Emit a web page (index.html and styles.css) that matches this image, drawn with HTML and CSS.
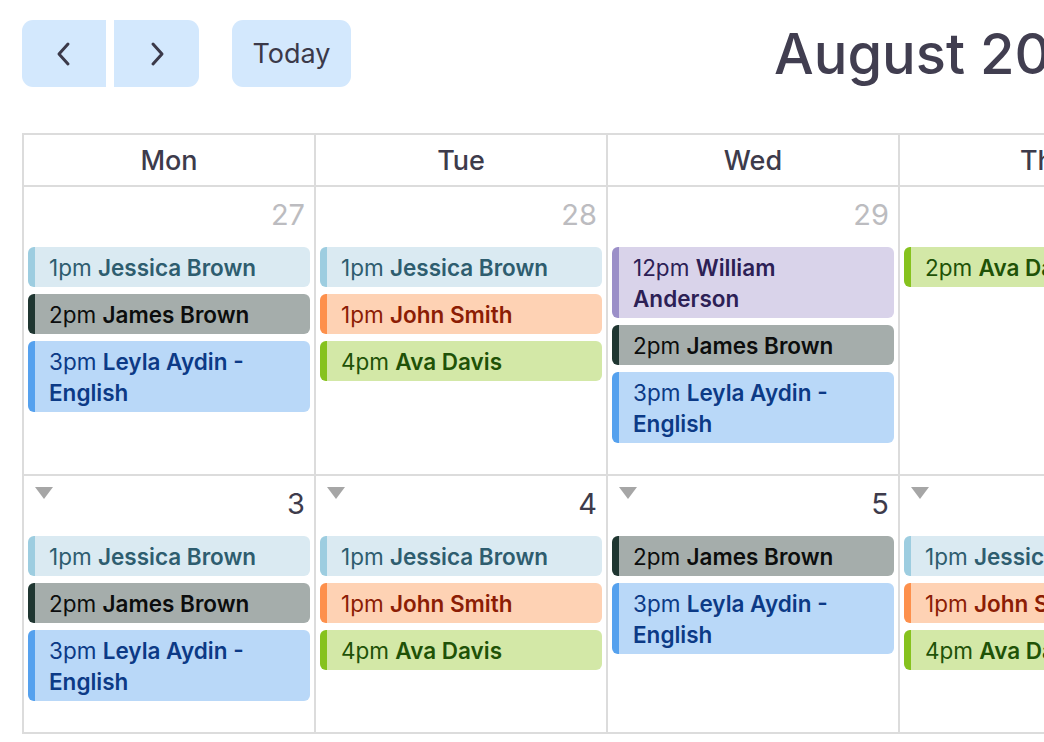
FILE: index.html
```html
<!DOCTYPE html>
<html lang="en">
<head>
<meta charset="utf-8">
<title>Calendar</title>
<link rel="stylesheet" href="styles.css">
</head>
<body>
<div class="page">
  <div class="toolbar">
    <div class="nav-group">
      <button class="btn btn-prev" aria-label="Previous">
        <svg width="16" height="26" viewBox="0 0 16 26"><path d="M12 3 L3 13 L12 23" fill="none" stroke="#3b3949" stroke-width="3" stroke-linecap="round" stroke-linejoin="round"/></svg>
      </button>
      <button class="btn btn-next" aria-label="Next">
        <svg width="16" height="26" viewBox="0 0 16 26"><path d="M4 3 L13 13 L4 23" fill="none" stroke="#3b3949" stroke-width="3" stroke-linecap="round" stroke-linejoin="round"/></svg>
      </button>
    </div>
    <button class="btn btn-today">Today</button>
    <h1 class="title">August 2026</h1>
  </div>

  <div class="calendar">
    <div class="head">Mon</div>
    <div class="head">Tue</div>
    <div class="head">Wed</div>
    <div class="head">Thu</div>
    <div class="head">Fri</div>
    <div class="head">Sat</div>
    <div class="head">Sun</div>

    <!-- week 1 -->
    <div class="cell">
      <div class="day-top"><span></span><span class="num other">27</span></div>
      <div class="ev ev-jessica"><span class="t">1pm</span> <b>Jessica Brown</b></div>
      <div class="ev ev-james"><span class="t">2pm</span> <b>James Brown</b></div>
      <div class="ev ev-leyla"><span class="t">3pm</span> <b>Leyla Aydin - English</b></div>
    </div>
    <div class="cell">
      <div class="day-top"><span></span><span class="num other">28</span></div>
      <div class="ev ev-jessica"><span class="t">1pm</span> <b>Jessica Brown</b></div>
      <div class="ev ev-john"><span class="t">1pm</span> <b>John Smith</b></div>
      <div class="ev ev-ava"><span class="t">4pm</span> <b>Ava Davis</b></div>
    </div>
    <div class="cell">
      <div class="day-top"><span></span><span class="num other">29</span></div>
      <div class="ev ev-william"><span class="t">12pm</span> <b>William Anderson</b></div>
      <div class="ev ev-james"><span class="t">2pm</span> <b>James Brown</b></div>
      <div class="ev ev-leyla"><span class="t">3pm</span> <b>Leyla Aydin - English</b></div>
    </div>
    <div class="cell">
      <div class="day-top"><span></span><span class="num other">30</span></div>
      <div class="ev ev-ava"><span class="t">2pm</span> <b>Ava Davis</b></div>
    </div>
    <div class="cell">
      <div class="day-top"><span></span><span class="num other">31</span></div>
    </div>
    <div class="cell">
      <div class="day-top"><span class="tri"></span><span class="num">1</span></div>
    </div>
    <div class="cell">
      <div class="day-top"><span class="tri"></span><span class="num">2</span></div>
    </div>

    <!-- week 2 -->
    <div class="cell">
      <div class="day-top"><span class="tri"></span><span class="num">3</span></div>
      <div class="ev ev-jessica"><span class="t">1pm</span> <b>Jessica Brown</b></div>
      <div class="ev ev-james"><span class="t">2pm</span> <b>James Brown</b></div>
      <div class="ev ev-leyla"><span class="t">3pm</span> <b>Leyla Aydin - English</b></div>
    </div>
    <div class="cell">
      <div class="day-top"><span class="tri"></span><span class="num">4</span></div>
      <div class="ev ev-jessica"><span class="t">1pm</span> <b>Jessica Brown</b></div>
      <div class="ev ev-john"><span class="t">1pm</span> <b>John Smith</b></div>
      <div class="ev ev-ava"><span class="t">4pm</span> <b>Ava Davis</b></div>
    </div>
    <div class="cell">
      <div class="day-top"><span class="tri"></span><span class="num">5</span></div>
      <div class="ev ev-james"><span class="t">2pm</span> <b>James Brown</b></div>
      <div class="ev ev-leyla"><span class="t">3pm</span> <b>Leyla Aydin - English</b></div>
    </div>
    <div class="cell">
      <div class="day-top"><span class="tri"></span><span class="num">6</span></div>
      <div class="ev ev-jessica"><span class="t">1pm</span> <b>Jessica Brown</b></div>
      <div class="ev ev-john"><span class="t">1pm</span> <b>John Smith</b></div>
      <div class="ev ev-ava"><span class="t">4pm</span> <b>Ava Davis</b></div>
    </div>
    <div class="cell">
      <div class="day-top"><span class="tri"></span><span class="num">7</span></div>
    </div>
    <div class="cell">
      <div class="day-top"><span class="tri"></span><span class="num">8</span></div>
    </div>
    <div class="cell">
      <div class="day-top"><span class="tri"></span><span class="num">9</span></div>
    </div>
  </div>
</div>
</body>
</html>
```

FILE: styles.css
```css
html, body {
  margin: 0;
  padding: 0;
  overflow: hidden;
  background: #ffffff;
}

body {
  font-family: Inter, "Noto Sans", "Liberation Sans", sans-serif;
  color: #3d3b4b;
}

.page {
  padding: 20px 0 0 22px;
  width: 2100px;
}

.toolbar {
  display: flex;
  align-items: center;
  height: 67px;
}

.nav-group {
  display: flex;
  gap: 8px;
}

.btn {
  border: none;
  background: #d3e8fd;
  height: 67px;
  display: flex;
  align-items: center;
  justify-content: center;
  padding: 0;
  font-family: inherit;
  color: #3b3949;
}

.btn-prev {
  width: 84px;
  border-radius: 11px 0 0 11px;
}

.btn-next {
  width: 85px;
  border-radius: 0 11px 11px 0;
}

.btn-today {
  width: 119px;
  margin-left: 33px;
  border-radius: 11px;
  font-size: 27px;
  font-weight: 400;
}

.title {
  margin: 0 0 0 423px;
  font-size: 56px;
  font-weight: 500;
  color: #413e50;
  letter-spacing: 0;
  white-space: nowrap;
}

.calendar {
  margin-top: 46px;
  display: grid;
  grid-template-columns: repeat(7, 292px);
  border-top: 2px solid #dcdcdc;
  border-left: 2px solid #dcdcdc;
  width: max-content;
}

.head {
  height: 50px;
  display: flex;
  align-items: center;
  justify-content: center;
  font-size: 27px;
  font-weight: 500;
  color: #3d3b4b;
  border-right: 2px solid #dcdcdc;
  border-bottom: 2px solid #dcdcdc;
}

.cell {
  border-right: 2px solid #dcdcdc;
  border-bottom: 2px solid #dcdcdc;
  padding: 0 4px 31px;
  display: flex;
  flex-direction: column;
  gap: 7px;
}

.day-top {
  height: 53px;
  display: flex;
  justify-content: space-between;
  align-items: flex-start;
  padding: 0 5px 0 7px;
}

.num {
  font-size: 29px;
  line-height: 36px;
  margin-top: 10px;
  color: #3d3b4b;
}

.num.other {
  color: #bcbcc0;
}

.tri {
  width: 0;
  height: 0;
  margin-top: 11px;
  border-left: 9px solid transparent;
  border-right: 9px solid transparent;
  border-top: 12px solid #a6a6a6;
}

.ev {
  border-left: 7px solid;
  border-radius: 6px;
  padding: 4.5px 10px 4.5px 14px;
  font-size: 22.5px;
  line-height: 31px;
}

.ev b {
  font-weight: 600;
}

.ev-jessica { background: #daeaf2; border-color: #9dcde0; color: #2e5d6f; }
.ev-james   { background: #a5adab; border-color: #1f3631; color: #0c0d0d; }
.ev-leyla   { background: #b9d8f8; border-color: #55a1ee; color: #0c3a86; }
.ev-john    { background: #fed2b4; border-color: #fd904c; color: #8c1d05; }
.ev-ava     { background: #d3e8a7; border-color: #86c21e; color: #1f5207; }
.ev-william { background: #d9d3ea; border-color: #9b8fc8; color: #2c2055; }
```
